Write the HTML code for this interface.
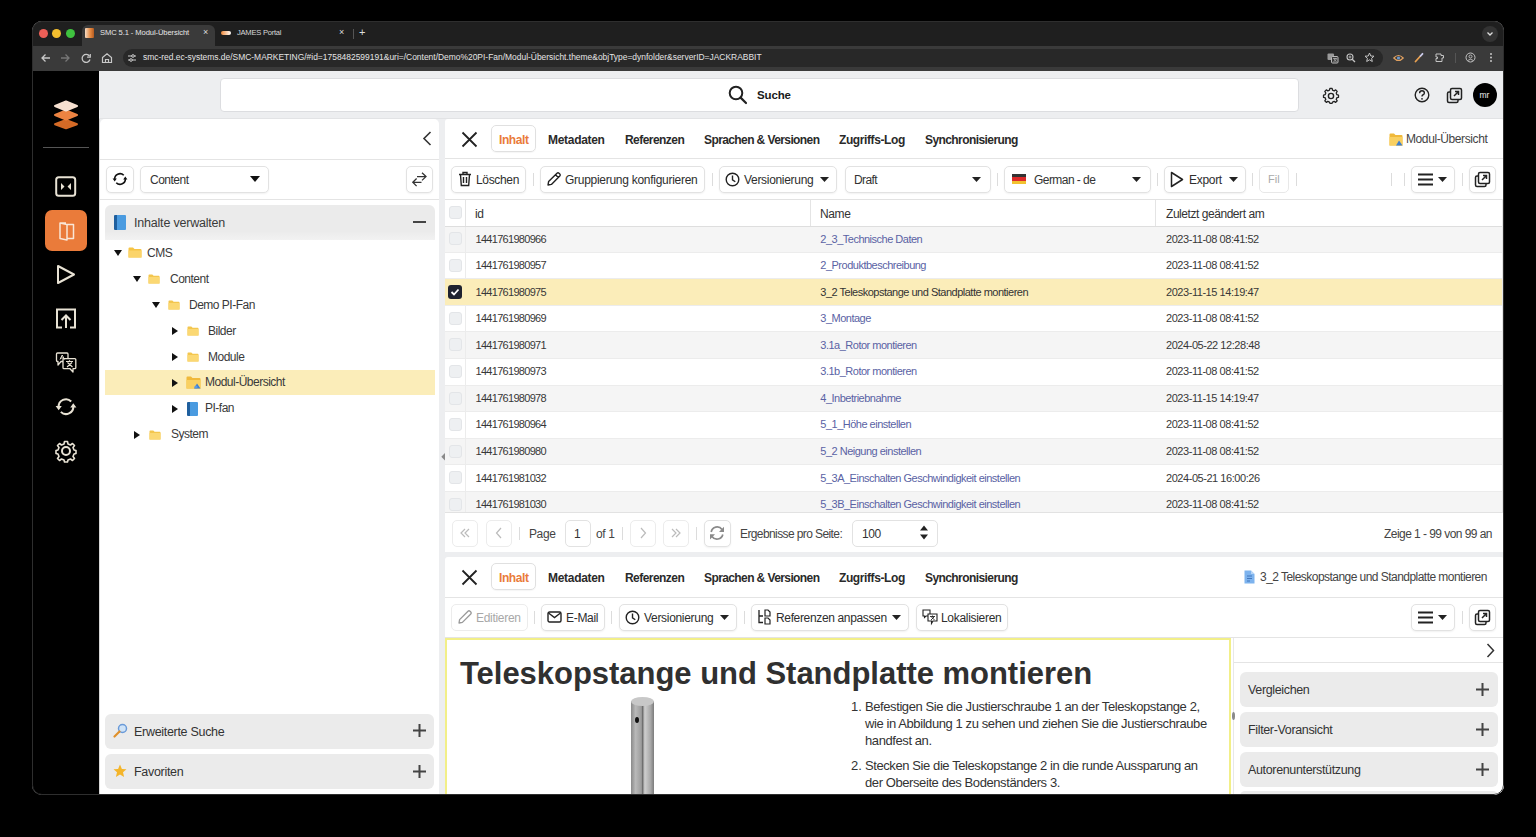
<!DOCTYPE html>
<html><head><meta charset="utf-8">
<style>
*{box-sizing:border-box;margin:0;padding:0}
html,body{width:1536px;height:837px;background:#000;overflow:hidden;font-family:"Liberation Sans",sans-serif;color:#333}
#win{position:absolute;left:0;top:0;width:1536px;height:837px;clip-path:inset(21px 32px 42px 32px round 10px);background:#edeef0}
.a{position:absolute}
.t{position:absolute;white-space:nowrap;line-height:1}
.panel{position:absolute;background:#fff;border-radius:5px 5px 0 0}
.btn{position:absolute;border:1px solid #e2e2e2;border-radius:5px;background:#fff;box-shadow:0 1px 2px rgba(0,0,0,.06)}
.sep{position:absolute;width:1px;height:13px;background:#dcdcdc}
svg{position:absolute;overflow:visible}
.ls12{letter-spacing:-0.5px}
.ls11{letter-spacing:-0.5px}
</style></head>
<body>
<div id="win">
<!-- browser chrome -->
<div class="a" style="left:0;top:0;width:1536px;height:25px;top:21px;background:#1f1f1f"></div>
<div class="a" style="left:0;top:46px;width:1536px;height:25px;background:#3a3a3a"></div>
<!-- active tab -->
<div class="a" style="left:82px;top:25px;width:133px;height:21px;background:#3a3a3a;border-radius:6px 6px 0 0"></div>
<div class="a" style="left:39px;top:29px;width:9px;height:9px;border-radius:50%;background:#ed5f57"></div>
<div class="a" style="left:52px;top:29px;width:9px;height:9px;border-radius:50%;background:#f4bf2f"></div>
<div class="a" style="left:66px;top:29px;width:9px;height:9px;border-radius:50%;background:#3fc23f"></div>
<div class="a" style="left:85px;top:28px;width:9px;height:10px;background:linear-gradient(90deg,#f6dcc5,#e5883f 60%,#b35a20);border-radius:1px"></div>
<div class="t" style="left:100px;top:29px;font-size:7.6px;color:#e6e6e6;letter-spacing:-0.1px">SMC 5.1 - Modul-Übersicht</div>
<div class="t" style="left:203px;top:28px;font-size:9px;color:#ddd">×</div>
<div class="a" style="left:221px;top:31px;width:10px;height:4px;background:linear-gradient(90deg,#f08a3a,#fff);border-radius:2px"></div>
<div class="t" style="left:237px;top:29px;font-size:7.6px;color:#d8d8d8;letter-spacing:-0.25px">JAMES Portal</div>
<div class="t" style="left:339px;top:28px;font-size:9px;color:#ddd">×</div>
<div class="a" style="left:353px;top:29px;width:1px;height:10px;background:#555"></div>
<div class="t" style="left:359px;top:27px;font-size:11px;color:#ddd">+</div>
<div class="a" style="left:1482px;top:26px;width:16px;height:16px;border-radius:50%;background:#333"></div>
<svg style="left:1486px;top:31px" width="8" height="6"><path d="M1.5 1.5 L4 4 L6.5 1.5" stroke="#ddd" stroke-width="1.3" fill="none"/></svg>
<!-- toolbar -->
<svg style="left:40px;top:53px" width="12" height="10"><path d="M10 5 H2 M5.5 1.5 L2 5 L5.5 8.5" stroke="#c8c8c8" stroke-width="1.3" fill="none"/></svg>
<svg style="left:60px;top:53px" width="12" height="10"><path d="M1 5 H9 M5.5 1.5 L9 5 L5.5 8.5" stroke="#777" stroke-width="1.3" fill="none"/></svg>
<svg style="left:81px;top:53px" width="11" height="11"><path d="M8.5 3.2 A4 4 0 1 0 9 6.5" stroke="#c8c8c8" stroke-width="1.3" fill="none"/><path d="M9.3 1 V4.2 H6.1" stroke="#c8c8c8" stroke-width="1.2" fill="none"/></svg>
<svg style="left:101px;top:52px" width="12" height="12"><path d="M1.5 5.5 L6 1.8 L10.5 5.5 V10.5 H1.5 Z M4.5 10.5 V7.5 H7.5 V10.5" stroke="#c8c8c8" stroke-width="1.2" fill="none"/></svg>
<div class="a" style="left:123px;top:49px;width:1260px;height:18px;border-radius:9px;background:#282828"></div>
<svg style="left:126px;top:52px" width="12" height="12"><path d="M2 4 H6 M8 4 H10 M2 8 H4 M6 8 H10" stroke="#ccc" stroke-width="1.2" fill="none"/><circle cx="7" cy="4" r="1.3" stroke="#ccc" fill="none"/><circle cx="5" cy="8" r="1.3" stroke="#ccc" fill="none"/></svg>
<div class="t" style="left:143px;top:53px;font-size:8.45px;color:#e4e4e4;letter-spacing:0">smc-red.ec-systems.de/SMC-MARKETING/#id=1758482599191&amp;uri=/Content/Demo%20PI-Fan/Modul-Übersicht.theme&amp;objType=dynfolder&amp;serverID=JACKRABBIT</div>
<!-- toolbar right icons -->
<svg style="left:1327px;top:53px" width="12" height="11"><rect x="0.5" y="0.5" width="6.5" height="6.5" rx="1" fill="#9a9a9a"/><rect x="4.5" y="3.5" width="6.5" height="6.5" rx="1" stroke="#bbb" stroke-width="1" fill="#3a3a3a"/><path d="M6 5.5 H10 M8 5 V6 M6.5 9 L9.5 6 M7 6 L9.5 9" stroke="#bbb" stroke-width="0.7"/></svg>
<svg style="left:1346px;top:53px" width="10" height="10"><circle cx="4" cy="4" r="3" stroke="#c4c4c4" stroke-width="1.1" fill="none"/><path d="M6.2 6.2 L9 9" stroke="#c4c4c4" stroke-width="1.3"/><path d="M2.5 4 H5.5 M4 2.5 V5.5" stroke="#c4c4c4" stroke-width="0.8"/></svg>
<svg style="left:1364px;top:52px" width="11" height="11"><path d="M5.5 1 L6.8 4 L10 4.2 L7.6 6.3 L8.3 9.5 L5.5 7.8 L2.7 9.5 L3.4 6.3 L1 4.2 L4.2 4 Z" stroke="#c4c4c4" stroke-width="1" fill="none" stroke-linejoin="round"/></svg>
<svg style="left:1393px;top:54px" width="11" height="8"><path d="M0.8 4 Q5.5 -1 10.2 4 Q5.5 9 0.8 4 Z" fill="none" stroke="#e0a060" stroke-width="1.2"/><circle cx="5.5" cy="4" r="1.6" fill="#6a9ad0"/></svg>
<svg style="left:1414px;top:52px" width="10" height="11"><path d="M1.5 9.5 L6.5 4" stroke="#e8a050" stroke-width="1.8" stroke-linecap="round"/><path d="M6.5 4 L8.5 1.8" stroke="#c8c8e8" stroke-width="1.8" stroke-linecap="round"/></svg>
<svg style="left:1435px;top:52px" width="11" height="11"><path d="M1 2 H6 V3.5 H8.5 V6 H7 V9.5 H1 V6.5 H2.5 V5 H1 Z" stroke="#c4c4c4" stroke-width="1" fill="none" stroke-linejoin="round"/></svg>
<div class="a" style="left:1455px;top:53px;width:1px;height:10px;background:#555"></div>
<svg style="left:1465px;top:52px" width="11" height="11"><circle cx="5.5" cy="5.5" r="4.5" stroke="#c4c4c4" stroke-width="1" fill="none"/><circle cx="5.5" cy="4.5" r="1.5" stroke="#c4c4c4" stroke-width="0.9" fill="none"/><path d="M2.6 8.5 Q5.5 6 8.4 8.5" stroke="#c4c4c4" stroke-width="0.9" fill="none"/></svg>
<div class="a" style="left:1490px;top:53px;width:2px;height:2px;background:#c4c4c4;border-radius:1px;box-shadow:0 3.5px 0 #c4c4c4,0 7px 0 #c4c4c4"></div>

<!-- sidebar -->
<div class="a" style="left:32px;top:71px;width:67px;height:724px;background:#000"></div>
<svg style="left:52px;top:98px" width="28" height="32">
  <path d="M14 22 L25 26.2 L14 30.2 L3 26.2 Z" fill="#d56a26" stroke="#d56a26" stroke-width="2" stroke-linejoin="round"/>
  <path d="M14 12.5 L25 17 L14 21.5 L3 17 Z" fill="#ec8342" stroke="#ec8342" stroke-width="2" stroke-linejoin="round"/>
  <path d="M14 3.5 L25 8 L14 12.5 L3 8 Z" fill="#f6e0d0" stroke="#f6e0d0" stroke-width="2" stroke-linejoin="round"/>
</svg>
<div class="a" style="left:43px;top:147px;width:46px;height:1px;background:#555"></div>
<svg style="left:55px;top:176px" width="22" height="21"><rect x="1.2" y="1.2" width="19" height="18.5" rx="2.5" stroke="#e8e2d4" stroke-width="2" fill="none"/><path d="M6 7 L9.5 10.5 L6 14 Z M16 7 L12.5 10.5 L16 14 Z" fill="#e8e2d4"/></svg>
<div class="a" style="left:45px;top:210px;width:42px;height:41px;background:#ea7b3a;border-radius:7px"></div>
<svg style="left:57px;top:220px" width="20" height="22"><path d="M3 3 L10 4.5 V20 L3 18.5 Z M10 4.5 H16.5 V18.5 H10 M3 3 H9" stroke="#f9e6d6" stroke-width="1.5" fill="none" stroke-linejoin="round"/></svg>
<svg style="left:56px;top:264px" width="20" height="21"><path d="M2 2 L18 10.5 L2 19 Z" stroke="#e8e2d4" stroke-width="2" fill="none" stroke-linejoin="round"/></svg>
<svg style="left:55px;top:308px" width="22" height="21"><path d="M7 19.5 H2 V1.5 H20 V19.5 H15 M11 20 V8 M6.5 12 L11 7.5 L15.5 12" stroke="#e8e2d4" stroke-width="2" fill="none"/></svg>
<svg style="left:55px;top:351px" width="22" height="22"><path d="M2.5 2 H12 Q13 2 13 3 V9.5 Q13 10.5 12 10.5 H6 L3 14 V10.5 H2.5 Q1.5 10.5 1.5 9.5 V3 Q1.5 2 2.5 2 Z" stroke="#e8e2d4" stroke-width="1.3" fill="none" stroke-linejoin="round"/><path d="M9 7.6 H19.8 Q20.8 7.6 20.8 8.6 V16.7 Q20.8 17.7 19.8 17.7 H18 V21 L15 17.7 H9 Q8 17.7 8 16.7 V8.6 Q8 7.6 9 7.6 Z" stroke="#e8e2d4" stroke-width="1.3" fill="#000" stroke-linejoin="round"/><path d="M5 8.5 L7.2 4 L9.4 8.5 M5.9 7 H8.5" stroke="#e8e2d4" stroke-width="1" fill="none"/><path d="M11 10.5 H18 M14.5 9.3 V10.5 M12 16 L17 11.5 M12.5 11.5 L17.5 16" stroke="#e8e2d4" stroke-width="1.1" fill="none"/></svg>
<svg style="left:55px;top:396px" width="22" height="22"><path d="M3.7 11.2 A7.3 7.3 0 0 1 16.2 5.5 M18.3 10.2 A7.3 7.3 0 0 1 5.84 15.86" stroke="#e8e2d4" stroke-width="2" fill="none"/><path d="M0.6 10 H6.8 L3.7 14.2 Z M15.2 11.4 H21.4 L18.3 7.2 Z" fill="#e8e2d4"/></svg>
<svg style="left:55px;top:440px" width="22" height="22"><circle cx="11" cy="11" r="4" stroke="#e8e2d4" stroke-width="2" fill="none"/><path d="M9.5 1.5 H12.5 L13 4 L15.5 5 L17.5 3.5 L19.5 5.5 L18 7.5 L19 10 L21 10.5 V13.5 L19 14 L18 16.5 L19.5 18.5 L17.5 20.5 L15.5 19 L13 20 L12.5 22 H9.5 L9 20 L6.5 19 L4.5 20.5 L2.5 18.5 L4 16.5 L3 14 L1 13.5 V10.5 L3 10 L4 7.5 L2.5 5.5 L4.5 3.5 L6.5 5 L9 4 Z" stroke="#e8e2d4" stroke-width="1.6" fill="none" stroke-linejoin="round"/></svg>

<!-- header -->
<div class="a" style="left:99px;top:71px;width:1405px;height:48px;background:#edeef0;border-bottom:1px solid #e2e3e5"></div>
<div class="a" style="left:220px;top:78px;width:1079px;height:34px;background:#fff;border:1px solid #dcdde0;border-radius:4px"></div>
<svg style="left:728px;top:85px" width="20" height="20"><circle cx="8" cy="8" r="6.3" stroke="#222" stroke-width="2" fill="none"/><path d="M12.6 12.6 L18 18" stroke="#222" stroke-width="2.2" stroke-linecap="round"/></svg>
<div class="t" style="left:757px;top:90px;font-size:11.5px;font-weight:bold;color:#1a1a1a;letter-spacing:-0.15px">Suche</div>
<svg style="left:1323px;top:88px" width="16" height="16"><circle cx="8" cy="8" r="2.6" stroke="#222" stroke-width="1.4" fill="none"/><path d="M6.9 1 H9.1 L9.5 2.8 L11.2 3.5 L12.7 2.5 L14.2 4 L13.2 5.6 L13.9 7.3 L15.5 7.7 V9.9 L13.9 10.3 L13.2 12 L14.2 13.5 L12.7 15 L11.2 14 L9.5 14.7 L9.1 16 H6.9 L6.5 14.7 L4.8 14 L3.3 15 L1.8 13.5 L2.8 12 L2.1 10.3 L0.5 9.9 V7.7 L2.1 7.3 L2.8 5.6 L1.8 4 L3.3 2.5 L4.8 3.5 L6.5 2.8 Z" stroke="#222" stroke-width="1.3" fill="none" stroke-linejoin="round" transform="translate(0,-0.6)"/></svg>
<svg style="left:1414px;top:87px" width="16" height="16"><circle cx="8" cy="8" r="6.8" stroke="#222" stroke-width="1.4" fill="none"/><path d="M5.6 6.2 Q5.6 3.8 8 3.8 Q10.4 3.8 10.4 6 Q10.4 7.4 8.8 8 Q8 8.4 8 9.6" stroke="#222" stroke-width="1.4" fill="none"/><circle cx="8" cy="11.8" r="0.9" fill="#222"/></svg>
<svg style="left:1446px;top:87px" width="17" height="17"><path d="M4.5 5 H3 Q1.5 5 1.5 6.5 V14 Q1.5 15.5 3 15.5 H10.5 Q12 15.5 12 14 V12.5" stroke="#222" stroke-width="1.5" fill="none"/><rect x="4.5" y="1.5" width="11" height="11" rx="1.5" stroke="#222" stroke-width="1.5" fill="none"/><path d="M8 9 L12.5 4.5 M9 4.5 H12.5 V8" stroke="#222" stroke-width="1.5" fill="none"/></svg>
<div class="a" style="left:1473px;top:83px;width:24px;height:24px;border-radius:50%;background:#000"></div>
<div class="t" style="left:1479.5px;top:91px;font-size:8.5px;color:#eee;letter-spacing:-0.2px">mr</div>


<!-- LEFT PANEL -->
<div class="panel" style="left:100px;top:119px;width:339px;height:675px"></div>
<div class="a" style="left:99px;top:119px;width:1px;height:675px;background:#d6d6d6"></div>
<svg style="left:422px;top:131px" width="10" height="15"><path d="M8.5 1 L2 7.5 L8.5 14" stroke="#333" stroke-width="1.6" fill="none"/></svg>
<div class="a" style="left:100px;top:159px;width:339px;height:1px;background:#e4e4e4"></div>
<div class="btn" style="left:106px;top:166px;width:28px;height:27px"></div>
<svg style="left:112px;top:171.3px" width="16" height="16"><path d="M2.7 8.5 A5.3 5.3 0 0 1 11.75 4.25 M13.3 7.5 A5.3 5.3 0 0 1 4.25 11.75" stroke="#111" stroke-width="1.6" fill="none"/><path d="M0.6 7.6 H4.8 L2.7 10.4 Z M11.2 8.4 H15.4 L13.3 5.6 Z" fill="#111"/></svg>
<div class="btn" style="left:140px;top:166px;width:129px;height:27px"></div>
<div class="t ls12" style="left:150px;top:174px;font-size:12px;color:#333">Content</div>
<svg style="left:250px;top:176px" width="10" height="6"><path d="M0 0 H10 L5 6 Z" fill="#111"/></svg>
<div class="btn" style="left:406px;top:166px;width:27px;height:27px"></div>
<svg style="left:406px;top:166px" width="27" height="27"><path d="M11 10.6 H20 M16 6.8 L20 10.6 L16 14.4 M15.5 16.3 H6.8 M10.6 12.5 L6.8 16.3 L10.6 20.1" stroke="#333" stroke-width="1.3" fill="none"/></svg>
<div class="a" style="left:100px;top:199px;width:339px;height:1px;background:#e4e4e4"></div>
<div class="a" style="left:105px;top:205px;width:330px;height:35px;background:linear-gradient(#ebebeb 75%,#f2f2f2);border-radius:6px 6px 0 0"></div>
<div class="a" style="left:114px;top:215px;width:12px;height:15px;background:#4a9be0;border-left:3px solid #1f5f9e;border-radius:1px"></div>
<div class="t ls12" style="left:134px;top:216.5px;font-size:12.5px;color:#3a3a3a;letter-spacing:-0.2px">Inhalte verwalten</div>
<div class="a" style="left:413px;top:221px;width:13px;height:2px;background:#444"></div>
<div class="a" style="left:105px;top:369.5px;width:330px;height:25.5px;background:#fbedb9"></div>
<svg style="left:114px;top:250.4px" width="8" height="6"><path d="M0 0 H8 L4 6 Z" fill="#111"/></svg>
<svg style="left:128px;top:247.4px" width="14" height="11"><path d="M0.5 1.5 Q0.5 0.5 1.5 0.5 H5 L6.5 2 H12.5 Q13.5 2 13.5 3 V10.5 H0.5 Z" fill="#f6c444"/><path d="M0.5 3.5 H13.5 V10.5 H0.5 Z" fill="#fbd46a"/></svg>
<div class="t ls12" style="left:147px;top:246.9px;font-size:12px;color:#3a3a3a">CMS</div>
<svg style="left:133px;top:276.3px" width="8" height="6"><path d="M0 0 H8 L4 6 Z" fill="#111"/></svg>
<svg style="left:148px;top:274.3px" width="12" height="10"><path d="M0.5 1.3 Q0.5 0.5 1.3 0.5 H4.3 L5.6 1.8 H10.8 Q11.5 1.8 11.5 2.6 V9.5 H0.5 Z" fill="#f3c64e"/><path d="M0.5 3 H11.5 V9.5 H0.5 Z" fill="#fbd873"/></svg>
<div class="t ls12" style="left:170px;top:272.8px;font-size:12px;color:#3a3a3a">Content</div>
<svg style="left:152px;top:302.2px" width="8" height="6"><path d="M0 0 H8 L4 6 Z" fill="#111"/></svg>
<svg style="left:168px;top:300.2px" width="12" height="10"><path d="M0.5 1.3 Q0.5 0.5 1.3 0.5 H4.3 L5.6 1.8 H10.8 Q11.5 1.8 11.5 2.6 V9.5 H0.5 Z" fill="#f3c64e"/><path d="M0.5 3 H11.5 V9.5 H0.5 Z" fill="#fbd873"/></svg>
<div class="t ls12" style="left:189px;top:298.7px;font-size:12px;color:#3a3a3a">Demo PI-Fan</div>
<svg style="left:172px;top:327.1px" width="6" height="8"><path d="M0 0 V8 L6 4 Z" fill="#111"/></svg>
<svg style="left:187px;top:326.1px" width="12" height="10"><path d="M0.5 1.3 Q0.5 0.5 1.3 0.5 H4.3 L5.6 1.8 H10.8 Q11.5 1.8 11.5 2.6 V9.5 H0.5 Z" fill="#f3c64e"/><path d="M0.5 3 H11.5 V9.5 H0.5 Z" fill="#fbd873"/></svg>
<div class="t ls12" style="left:208px;top:324.6px;font-size:12px;color:#3a3a3a">Bilder</div>
<svg style="left:172px;top:353.0px" width="6" height="8"><path d="M0 0 V8 L6 4 Z" fill="#111"/></svg>
<svg style="left:187px;top:352.0px" width="12" height="10"><path d="M0.5 1.3 Q0.5 0.5 1.3 0.5 H4.3 L5.6 1.8 H10.8 Q11.5 1.8 11.5 2.6 V9.5 H0.5 Z" fill="#f3c64e"/><path d="M0.5 3 H11.5 V9.5 H0.5 Z" fill="#fbd873"/></svg>
<div class="t ls12" style="left:208px;top:350.5px;font-size:12px;color:#3a3a3a">Module</div>
<svg style="left:172px;top:378.9px" width="6" height="8"><path d="M0 0 V8 L6 4 Z" fill="#111"/></svg>
<svg style="left:186px;top:375.9px" width="16" height="14"><path d="M0.5 1.5 Q0.5 0.5 1.5 0.5 H5 L6.5 2 H13.5 Q14.5 2 14.5 3 V12.5 H0.5 Z" fill="#f0b93a"/><path d="M0.5 4 H14.5 V12.5 H0.5 Z" fill="#f9d061"/><path d="M8 12.5 L11 7.5 L14.5 12.5 Z" fill="#3e7fd0"/><circle cx="10" cy="11" r="1.6" fill="#5a9ae6"/></svg>
<div class="t ls12" style="left:205px;top:376.4px;font-size:12px;color:#3a3a3a">Modul-Übersicht</div>
<svg style="left:172px;top:404.8px" width="6" height="8"><path d="M0 0 V8 L6 4 Z" fill="#111"/></svg>
<div class="a" style="left:187px;top:401.8px;width:11px;height:14px;background:#4a9be0;border-left:3px solid #1f5f9e;border-radius:1px"></div>
<div class="t ls12" style="left:205px;top:402.3px;font-size:12px;color:#3a3a3a">PI-fan</div>
<svg style="left:134px;top:430.7px" width="6" height="8"><path d="M0 0 V8 L6 4 Z" fill="#111"/></svg>
<svg style="left:149px;top:429.7px" width="12" height="10"><path d="M0.5 1.3 Q0.5 0.5 1.3 0.5 H4.3 L5.6 1.8 H10.8 Q11.5 1.8 11.5 2.6 V9.5 H0.5 Z" fill="#f3c64e"/><path d="M0.5 3 H11.5 V9.5 H0.5 Z" fill="#fbd873"/></svg>
<div class="t ls12" style="left:171px;top:428.2px;font-size:12px;color:#3a3a3a">System</div>
<svg style="left:441px;top:452.5px" width="4" height="8"><path d="M4 0 V7.5 L0.3 3.75 Z" fill="#8a8a8a"/></svg>
<div class="a" style="left:105px;top:714px;width:329px;height:35px;background:#ebebeb;border-radius:6px"></div>
<svg style="left:113px;top:723px" width="15" height="15"><circle cx="9.5" cy="5.5" r="4" stroke="#6a9ad8" stroke-width="1.5" fill="#cfe3f7"/><path d="M6.5 8.5 L1.5 13.5" stroke="#e0902a" stroke-width="2.2" stroke-linecap="round"/></svg>
<div class="t ls12" style="left:134px;top:726px;font-size:12.5px;color:#333;letter-spacing:-0.3px">Erweiterte Suche</div>
<svg style="left:413px;top:724px" width="13" height="13"><path d="M6.5 0 V13 M0 6.5 H13" stroke="#444" stroke-width="2"/></svg>
<div class="a" style="left:105px;top:754px;width:329px;height:35px;background:#ebebeb;border-radius:6px"></div>
<svg style="left:113px;top:764px" width="14" height="14"><path d="M7 0.5 L8.9 4.9 L13.5 5.2 L10 8.2 L11.1 13 L7 10.4 L2.9 13 L4 8.2 L0.5 5.2 L5.1 4.9 Z" fill="#f4b52a"/></svg>
<div class="t ls12" style="left:134px;top:766px;font-size:12.5px;color:#333;letter-spacing:-0.3px">Favoriten</div>
<svg style="left:413px;top:765px" width="13" height="13"><path d="M6.5 0 V13 M0 6.5 H13" stroke="#444" stroke-width="2"/></svg>

<!-- UPPER RIGHT PANEL -->
<div class="panel" style="left:445px;top:119px;width:1059px;height:433px;border-radius:3px 3px 0 0"></div>
<svg style="left:461px;top:131px" width="17" height="17"><path d="M1.5 1.5 L15.5 15.5 M15.5 1.5 L1.5 15.5" stroke="#222" stroke-width="1.8"/></svg>
<div class="a" style="left:491px;top:125px;width:45px;height:27px;border:1px solid #e0e0e0;border-radius:5px;box-shadow:0 1px 1px rgba(0,0,0,.04)"></div>
<div class="t" style="left:499px;top:134px;font-size:12px;font-weight:bold;color:#ea7b3a;letter-spacing:-0.4px">Inhalt</div>
<div class="t" style="left:548px;top:134px;font-size:12px;font-weight:bold;color:#2a2a2a;letter-spacing:-0.3px">Metadaten</div>
<div class="t" style="left:625px;top:134px;font-size:12px;font-weight:bold;color:#2a2a2a;letter-spacing:-0.55px">Referenzen</div>
<div class="t" style="left:704px;top:134px;font-size:12px;font-weight:bold;color:#2a2a2a;letter-spacing:-0.6px">Sprachen &amp; Versionen</div>
<div class="t" style="left:839px;top:134px;font-size:12px;font-weight:bold;color:#2a2a2a;letter-spacing:-0.4px">Zugriffs-Log</div>
<div class="t" style="left:925px;top:134px;font-size:12px;font-weight:bold;color:#2a2a2a;letter-spacing:-0.58px">Synchronisierung</div>
<svg style="left:1389px;top:133px" width="14" height="13"><path d="M0.5 1.5 Q0.5 0.5 1.5 0.5 H5 L6.5 2 H12.5 Q13.5 2 13.5 3 V12.5 H0.5 Z" fill="#f0b93a"/><path d="M0.5 4 H13.5 V12.5 H0.5 Z" fill="#f9d061"/><path d="M7 12.5 L10 7.5 L13.5 12.5 Z" fill="#3e7fd0"/></svg>
<div class="t" style="left:1406px;top:133px;font-size:12px;color:#444;letter-spacing:-0.4px">Modul-Übersicht</div>
<div class="a" style="left:445px;top:158px;width:1059px;height:1px;background:#e4e4e4"></div>
<!-- toolbar -->
<div class="btn" style="left:451px;top:166px;width:75px;height:27px"></div>
<svg style="left:458px;top:171px" width="14" height="16"><path d="M1 3.5 H13 M5 3.5 V1.5 H9 V3.5 M2.5 3.5 L3.3 14.5 H10.7 L11.5 3.5 M5.5 6 V12 M8.5 6 V12" stroke="#222" stroke-width="1.4" fill="none"/></svg>
<div class="t" style="left:476px;top:174px;font-size:12px;color:#2e2e2e;letter-spacing:-0.34px">Löschen</div>
<div class="sep" style="left:533px;top:173px"></div>
<div class="btn" style="left:540px;top:166px;width:165px;height:27px"></div>
<svg style="left:546px;top:171px" width="16" height="16"><path d="M2 14 L2.6 10.6 L11 2.2 Q12 1.2 13 2.2 L13.8 3 Q14.8 4 13.8 5 L5.4 13.4 Z M9.5 3.7 L12.3 6.5" stroke="#222" stroke-width="1.4" fill="none" stroke-linejoin="round"/></svg>
<div class="t" style="left:565px;top:174px;font-size:12px;color:#2e2e2e;letter-spacing:-0.28px">Gruppierung konfigurieren</div>
<div class="sep" style="left:712px;top:173px"></div>
<div class="btn" style="left:719px;top:166px;width:118px;height:27px"></div>
<svg style="left:725px;top:172px" width="15" height="15"><circle cx="7.5" cy="7.5" r="6.3" stroke="#222" stroke-width="1.4" fill="none"/><path d="M7.5 3.5 V7.8 L10.3 9.8" stroke="#222" stroke-width="1.4" fill="none"/></svg>
<div class="t" style="left:744px;top:174px;font-size:12px;color:#2e2e2e;letter-spacing:-0.31px">Versionierung</div>
<svg style="left:820px;top:177px" width="9" height="5"><path d="M0 0 H9 L4.5 5 Z" fill="#222"/></svg>
<div class="btn" style="left:845px;top:166px;width:146px;height:27px"></div>
<div class="t" style="left:854px;top:174px;font-size:12px;color:#333;letter-spacing:-0.6px">Draft</div>
<svg style="left:972px;top:177px" width="9" height="5"><path d="M0 0 H9 L4.5 5 Z" fill="#222"/></svg>
<div class="sep" style="left:997px;top:173px"></div>
<div class="btn" style="left:1004px;top:166px;width:147px;height:27px"></div>
<div class="a" style="left:1012px;top:174px;width:14px;height:10px;background:linear-gradient(#333 0 33%,#dd2a2a 33% 66%,#f2c230 66%)"></div>
<div class="t" style="left:1034px;top:174px;font-size:12px;color:#333;letter-spacing:-0.55px">German - de</div>
<svg style="left:1132px;top:177px" width="9" height="5"><path d="M0 0 H9 L4.5 5 Z" fill="#222"/></svg>
<div class="sep" style="left:1157px;top:173px"></div>
<div class="btn" style="left:1164px;top:166px;width:82px;height:27px"></div>
<svg style="left:1170px;top:171px" width="14" height="17"><path d="M1.5 1.5 L12.5 8.5 L1.5 15.5 Z" stroke="#222" stroke-width="1.5" fill="none" stroke-linejoin="round"/></svg>
<div class="t" style="left:1189px;top:174px;font-size:12px;color:#2e2e2e;letter-spacing:-0.3px">Export</div>
<svg style="left:1229px;top:177px" width="9" height="5"><path d="M0 0 H9 L4.5 5 Z" fill="#222"/></svg>
<div class="sep" style="left:1252px;top:173px"></div>
<div class="btn" style="left:1259px;top:166px;width:30px;height:27px;box-shadow:none;border-color:#e8e8e8"></div>
<div class="t" style="left:1268px;top:174px;font-size:11px;color:#aaa">Fil</div>
<div class="sep" style="left:1296px;top:173px"></div>
<div class="sep" style="left:1391px;top:173px"></div>
<div class="sep" style="left:1404px;top:173px"></div>
<div class="btn" style="left:1411px;top:166px;width:44px;height:27px"></div>
<svg style="left:1418px;top:173px" width="16" height="13"><path d="M0 1.5 H15 M0 6.5 H15 M0 11.5 H15" stroke="#222" stroke-width="2.2"/></svg>
<svg style="left:1438px;top:177px" width="9" height="5"><path d="M0 0 H9 L4.5 5 Z" fill="#222"/></svg>
<div class="sep" style="left:1462px;top:173px"></div>
<div class="btn" style="left:1469px;top:166px;width:27px;height:27px"></div>
<svg style="left:1474px;top:171px" width="17" height="17"><path d="M4.5 5 H3 Q1.5 5 1.5 6.5 V14 Q1.5 15.5 3 15.5 H10.5 Q12 15.5 12 14 V12.5" stroke="#222" stroke-width="1.5" fill="none"/><rect x="4.5" y="1.5" width="11" height="11" rx="1.5" stroke="#222" stroke-width="1.5" fill="none"/><path d="M8 9 L12.5 4.5 M9 4.5 H12.5 V8" stroke="#222" stroke-width="1.5" fill="none"/></svg>
<!-- table -->
<div class="a" style="left:445px;top:199px;width:1059px;height:1px;background:#e2e2e2"></div>
<div class="a" style="left:465px;top:200px;width:1px;height:26px;background:#e4e4e4"></div>
<div class="a" style="left:810px;top:200px;width:1px;height:26px;background:#e4e4e4"></div>
<div class="a" style="left:1155px;top:200px;width:1px;height:26px;background:#e4e4e4"></div>
<div class="a" style="left:449px;top:206px;width:13px;height:13px;background:#eef0f2;border:1px solid #e3e5e8;border-radius:3px"></div>
<div class="t" style="left:475px;top:208px;font-size:12px;color:#333;letter-spacing:-0.3px">id</div>
<div class="t" style="left:820px;top:208px;font-size:12px;color:#333;letter-spacing:-0.4px">Name</div>
<div class="t" style="left:1166px;top:208px;font-size:12px;color:#333;letter-spacing:-0.45px">Zuletzt geändert am</div>
<div class="a" style="left:445px;top:226.3px;width:1059px;height:285.7px;overflow:hidden">
<div class="a" style="left:0;top:0.00px;width:1059px;height:26.55px;background:#f5f5f5;border-bottom:1px solid #ececec"></div>
<div class="a" style="left:20px;top:0.00px;width:1px;height:26.55px;background:#ececec"></div>
<div class="a" style="left:4px;top:5.98px;width:13px;height:13px;background:#eef0f2;border:1px solid #e3e5e8;border-radius:3px"></div>
<div class="t" style="left:30.5px;top:7.28px;font-size:11px;color:#383838;letter-spacing:-0.7px">1441761980966</div>
<div class="t" style="left:375.3px;top:7.28px;font-size:11px;color:#5a62a4;letter-spacing:-0.5px">2_3_Technische Daten</div>
<div class="t" style="left:721px;top:7.28px;font-size:11px;color:#383838;letter-spacing:-0.45px">2023-11-08 08:41:52</div>
<div class="a" style="left:0;top:26.55px;width:1059px;height:26.55px;background:#fff;border-bottom:1px solid #ececec"></div>
<div class="a" style="left:20px;top:26.55px;width:1px;height:26.55px;background:#ececec"></div>
<div class="a" style="left:4px;top:32.53px;width:13px;height:13px;background:#eef0f2;border:1px solid #e3e5e8;border-radius:3px"></div>
<div class="t" style="left:30.5px;top:33.83px;font-size:11px;color:#383838;letter-spacing:-0.7px">1441761980957</div>
<div class="t" style="left:375.3px;top:33.83px;font-size:11px;color:#5a62a4;letter-spacing:-0.5px">2_Produktbeschreibung</div>
<div class="t" style="left:721px;top:33.83px;font-size:11px;color:#383838;letter-spacing:-0.45px">2023-11-08 08:41:52</div>
<div class="a" style="left:0;top:53.10px;width:1059px;height:26.55px;background:#fbedb9;border-bottom:1px solid #ececec"></div>
<div class="a" style="left:3px;top:58.38px;width:14px;height:14px;background:#1e2230;border-radius:3px"></div>
<svg style="left:5px;top:60.38px" width="10" height="10"><path d="M1.5 5 L4 7.5 L8.5 2.5" stroke="#fff" stroke-width="1.8" fill="none"/></svg>
<div class="t" style="left:30.5px;top:60.38px;font-size:11px;color:#383838;letter-spacing:-0.7px">1441761980975</div>
<div class="t" style="left:375.3px;top:60.38px;font-size:11px;color:#333;letter-spacing:-0.5px">3_2 Teleskopstange und Standplatte montieren</div>
<div class="t" style="left:721px;top:60.38px;font-size:11px;color:#383838;letter-spacing:-0.45px">2023-11-15 14:19:47</div>
<div class="a" style="left:0;top:79.65px;width:1059px;height:26.55px;background:#fff;border-bottom:1px solid #ececec"></div>
<div class="a" style="left:20px;top:79.65px;width:1px;height:26.55px;background:#ececec"></div>
<div class="a" style="left:4px;top:85.63px;width:13px;height:13px;background:#eef0f2;border:1px solid #e3e5e8;border-radius:3px"></div>
<div class="t" style="left:30.5px;top:86.93px;font-size:11px;color:#383838;letter-spacing:-0.7px">1441761980969</div>
<div class="t" style="left:375.3px;top:86.93px;font-size:11px;color:#5a62a4;letter-spacing:-0.5px">3_Montage</div>
<div class="t" style="left:721px;top:86.93px;font-size:11px;color:#383838;letter-spacing:-0.45px">2023-11-08 08:41:52</div>
<div class="a" style="left:0;top:106.20px;width:1059px;height:26.55px;background:#f5f5f5;border-bottom:1px solid #ececec"></div>
<div class="a" style="left:20px;top:106.20px;width:1px;height:26.55px;background:#ececec"></div>
<div class="a" style="left:4px;top:112.18px;width:13px;height:13px;background:#eef0f2;border:1px solid #e3e5e8;border-radius:3px"></div>
<div class="t" style="left:30.5px;top:113.48px;font-size:11px;color:#383838;letter-spacing:-0.7px">1441761980971</div>
<div class="t" style="left:375.3px;top:113.48px;font-size:11px;color:#5a62a4;letter-spacing:-0.5px">3.1a_Rotor montieren</div>
<div class="t" style="left:721px;top:113.48px;font-size:11px;color:#383838;letter-spacing:-0.45px">2024-05-22 12:28:48</div>
<div class="a" style="left:0;top:132.75px;width:1059px;height:26.55px;background:#fff;border-bottom:1px solid #ececec"></div>
<div class="a" style="left:20px;top:132.75px;width:1px;height:26.55px;background:#ececec"></div>
<div class="a" style="left:4px;top:138.73px;width:13px;height:13px;background:#eef0f2;border:1px solid #e3e5e8;border-radius:3px"></div>
<div class="t" style="left:30.5px;top:140.03px;font-size:11px;color:#383838;letter-spacing:-0.7px">1441761980973</div>
<div class="t" style="left:375.3px;top:140.03px;font-size:11px;color:#5a62a4;letter-spacing:-0.5px">3.1b_Rotor montieren</div>
<div class="t" style="left:721px;top:140.03px;font-size:11px;color:#383838;letter-spacing:-0.45px">2023-11-08 08:41:52</div>
<div class="a" style="left:0;top:159.30px;width:1059px;height:26.55px;background:#f5f5f5;border-bottom:1px solid #ececec"></div>
<div class="a" style="left:20px;top:159.30px;width:1px;height:26.55px;background:#ececec"></div>
<div class="a" style="left:4px;top:165.28px;width:13px;height:13px;background:#eef0f2;border:1px solid #e3e5e8;border-radius:3px"></div>
<div class="t" style="left:30.5px;top:166.58px;font-size:11px;color:#383838;letter-spacing:-0.7px">1441761980978</div>
<div class="t" style="left:375.3px;top:166.58px;font-size:11px;color:#5a62a4;letter-spacing:-0.5px">4_Inbetriebnahme</div>
<div class="t" style="left:721px;top:166.58px;font-size:11px;color:#383838;letter-spacing:-0.45px">2023-11-15 14:19:47</div>
<div class="a" style="left:0;top:185.85px;width:1059px;height:26.55px;background:#fff;border-bottom:1px solid #ececec"></div>
<div class="a" style="left:20px;top:185.85px;width:1px;height:26.55px;background:#ececec"></div>
<div class="a" style="left:4px;top:191.82px;width:13px;height:13px;background:#eef0f2;border:1px solid #e3e5e8;border-radius:3px"></div>
<div class="t" style="left:30.5px;top:193.12px;font-size:11px;color:#383838;letter-spacing:-0.7px">1441761980964</div>
<div class="t" style="left:375.3px;top:193.12px;font-size:11px;color:#5a62a4;letter-spacing:-0.5px">5_1_Höhe einstellen</div>
<div class="t" style="left:721px;top:193.12px;font-size:11px;color:#383838;letter-spacing:-0.45px">2023-11-08 08:41:52</div>
<div class="a" style="left:0;top:212.40px;width:1059px;height:26.55px;background:#f5f5f5;border-bottom:1px solid #ececec"></div>
<div class="a" style="left:20px;top:212.40px;width:1px;height:26.55px;background:#ececec"></div>
<div class="a" style="left:4px;top:218.38px;width:13px;height:13px;background:#eef0f2;border:1px solid #e3e5e8;border-radius:3px"></div>
<div class="t" style="left:30.5px;top:219.68px;font-size:11px;color:#383838;letter-spacing:-0.7px">1441761980980</div>
<div class="t" style="left:375.3px;top:219.68px;font-size:11px;color:#5a62a4;letter-spacing:-0.5px">5_2 Neigung einstellen</div>
<div class="t" style="left:721px;top:219.68px;font-size:11px;color:#383838;letter-spacing:-0.45px">2023-11-08 08:41:52</div>
<div class="a" style="left:0;top:238.95px;width:1059px;height:26.55px;background:#fff;border-bottom:1px solid #ececec"></div>
<div class="a" style="left:20px;top:238.95px;width:1px;height:26.55px;background:#ececec"></div>
<div class="a" style="left:4px;top:244.93px;width:13px;height:13px;background:#eef0f2;border:1px solid #e3e5e8;border-radius:3px"></div>
<div class="t" style="left:30.5px;top:246.23px;font-size:11px;color:#383838;letter-spacing:-0.7px">1441761981032</div>
<div class="t" style="left:375.3px;top:246.23px;font-size:11px;color:#5a62a4;letter-spacing:-0.5px">5_3A_Einschalten Geschwindigkeit einstellen</div>
<div class="t" style="left:721px;top:246.23px;font-size:11px;color:#383838;letter-spacing:-0.45px">2024-05-21 16:00:26</div>
<div class="a" style="left:0;top:265.50px;width:1059px;height:26.55px;background:#f5f5f5;border-bottom:1px solid #ececec"></div>
<div class="a" style="left:20px;top:265.50px;width:1px;height:26.55px;background:#ececec"></div>
<div class="a" style="left:4px;top:271.47px;width:13px;height:13px;background:#eef0f2;border:1px solid #e3e5e8;border-radius:3px"></div>
<div class="t" style="left:30.5px;top:272.77px;font-size:11px;color:#383838;letter-spacing:-0.7px">1441761981030</div>
<div class="t" style="left:375.3px;top:272.77px;font-size:11px;color:#5a62a4;letter-spacing:-0.5px">5_3B_Einschalten Geschwindigkeit einstellen</div>
<div class="t" style="left:721px;top:272.77px;font-size:11px;color:#383838;letter-spacing:-0.45px">2023-11-08 08:41:52</div>
</div>

<div class="a" style="left:445px;top:226px;width:1059px;height:1px;background:#dedede"></div>
<div class="a" style="left:1502px;top:200px;width:1px;height:312px;background:#e4e4e4"></div>
<!-- pager -->
<div class="a" style="left:445px;top:512px;width:1059px;height:1px;background:#e2e2e2"></div>
<div class="btn" style="left:452px;top:520px;width:26px;height:27px;box-shadow:none;border-color:#ececec"></div>
<svg style="left:459px;top:528px" width="12" height="10"><path d="M6 1 L2 5 L6 9 M10 1 L6 5 L10 9" stroke="#bbb" stroke-width="1.2" fill="none"/></svg>
<div class="btn" style="left:486px;top:520px;width:26px;height:27px;box-shadow:none;border-color:#ececec"></div>
<svg style="left:495px;top:527px" width="8" height="12"><path d="M6 1 L1.5 6 L6 11" stroke="#bbb" stroke-width="1.2" fill="none"/></svg>
<div class="sep" style="left:519px;top:527px"></div>
<div class="t" style="left:529px;top:528px;font-size:12px;color:#444;letter-spacing:-0.4px">Page</div>
<div class="btn" style="left:565px;top:520px;width:26px;height:27px;box-shadow:none"></div>
<div class="t" style="left:574px;top:528px;font-size:12px;color:#333">1</div>
<div class="t" style="left:596px;top:528px;font-size:12px;color:#444;letter-spacing:-0.4px">of 1</div>
<div class="sep" style="left:622px;top:527px"></div>
<div class="btn" style="left:630px;top:520px;width:26px;height:27px;box-shadow:none;border-color:#ececec"></div>
<svg style="left:639px;top:527px" width="8" height="12"><path d="M2 1 L6.5 6 L2 11" stroke="#bbb" stroke-width="1.2" fill="none"/></svg>
<div class="btn" style="left:663px;top:520px;width:26px;height:27px;box-shadow:none;border-color:#ececec"></div>
<svg style="left:670px;top:528px" width="12" height="10"><path d="M2 1 L6 5 L2 9 M6 1 L10 5 L6 9" stroke="#bbb" stroke-width="1.2" fill="none"/></svg>
<div class="sep" style="left:696px;top:527px"></div>
<div class="btn" style="left:704px;top:520px;width:27px;height:27px"></div>
<svg style="left:708.7px;top:524.9px" width="16" height="16"><path d="M2.2 7 A6 6 0 0 1 13 4.5 M13.8 9.5 A6 6 0 0 1 3 11.5" stroke="#8a8a8a" stroke-width="1.7" fill="none"/><path d="M10 7 H15 V1.8 Z M6 9.2 H1 V14.4 Z" fill="#8a8a8a"/></svg>
<div class="t" style="left:740px;top:528px;font-size:12px;color:#444;letter-spacing:-0.6px">Ergebnisse pro Seite:</div>
<div class="btn" style="left:852px;top:520px;width:86px;height:27px;box-shadow:none"></div>
<div class="t" style="left:862px;top:528px;font-size:12px;color:#333;letter-spacing:-0.4px">100</div>
<svg style="left:919px;top:524px" width="10" height="17"><path d="M1 6.5 L5 1.5 L9 6.5 Z M1 10.5 L5 15.5 L9 10.5 Z" fill="#222"/></svg>
<div class="t" style="left:1384px;top:528px;font-size:12px;color:#444;letter-spacing:-0.55px">Zeige 1 - 99 von 99 an</div>

<!-- LOWER RIGHT PANEL -->
<div class="panel" style="left:445px;top:557px;width:1059px;height:237px;border-radius:3px 3px 0 0"></div>
<svg style="left:461px;top:569px" width="17" height="17"><path d="M1.5 1.5 L15.5 15.5 M15.5 1.5 L1.5 15.5" stroke="#222" stroke-width="1.8"/></svg>
<div class="a" style="left:491px;top:563px;width:45px;height:27px;border:1px solid #e0e0e0;border-radius:5px;box-shadow:0 1px 1px rgba(0,0,0,.04)"></div>
<div class="t" style="left:499px;top:572px;font-size:12px;font-weight:bold;color:#ea7b3a;letter-spacing:-0.4px">Inhalt</div>
<div class="t" style="left:548px;top:572px;font-size:12px;font-weight:bold;color:#2a2a2a;letter-spacing:-0.3px">Metadaten</div>
<div class="t" style="left:625px;top:572px;font-size:12px;font-weight:bold;color:#2a2a2a;letter-spacing:-0.55px">Referenzen</div>
<div class="t" style="left:704px;top:572px;font-size:12px;font-weight:bold;color:#2a2a2a;letter-spacing:-0.6px">Sprachen &amp; Versionen</div>
<div class="t" style="left:839px;top:572px;font-size:12px;font-weight:bold;color:#2a2a2a;letter-spacing:-0.4px">Zugriffs-Log</div>
<div class="t" style="left:925px;top:572px;font-size:12px;font-weight:bold;color:#2a2a2a;letter-spacing:-0.58px">Synchronisierung</div>
<svg style="left:1244px;top:570px" width="11" height="14"><path d="M0.5 0.5 H7 L10.5 4 V13.5 H0.5 Z" fill="#7db3ee"/><path d="M7 0.5 V4 H10.5" fill="#b9d6f6"/><path d="M3 6 H8 M3 8.5 H8 M3 11 H6" stroke="#3b6fb5" stroke-width="0.9"/></svg>
<div class="t" style="left:1260px;top:571px;font-size:12px;color:#444;letter-spacing:-0.54px">3_2 Teleskopstange und Standplatte montieren</div>
<div class="a" style="left:445px;top:597px;width:1059px;height:1px;background:#e4e4e4"></div>
<!-- toolbar -->
<div class="btn" style="left:451px;top:604px;width:77px;height:27px;box-shadow:none;border-color:#ececec"></div>
<svg style="left:457px;top:609px" width="16" height="16"><path d="M2 14 L2.6 10.6 L11 2.2 Q12 1.2 13 2.2 L13.8 3 Q14.8 4 13.8 5 L5.4 13.4 Z" stroke="#999" stroke-width="1.3" fill="none" stroke-linejoin="round"/></svg>
<div class="t" style="left:476px;top:612px;font-size:12px;color:#a8a8a8;letter-spacing:-0.3px">Editieren</div>
<div class="sep" style="left:534px;top:611px"></div>
<div class="btn" style="left:541px;top:604px;width:64px;height:27px"></div>
<svg style="left:547px;top:611px" width="15" height="12"><rect x="1" y="1" width="13" height="10" rx="1.5" stroke="#222" stroke-width="1.4" fill="none"/><path d="M1.5 2 L7.5 6.5 L13.5 2" stroke="#222" stroke-width="1.4" fill="none"/></svg>
<div class="t" style="left:566px;top:612px;font-size:12px;color:#2e2e2e;letter-spacing:-0.3px">E-Mail</div>
<div class="sep" style="left:611px;top:611px"></div>
<div class="btn" style="left:619px;top:604px;width:118px;height:27px"></div>
<svg style="left:625px;top:610px" width="15" height="15"><circle cx="7.5" cy="7.5" r="6.3" stroke="#222" stroke-width="1.4" fill="none"/><path d="M7.5 3.5 V7.8 L10.3 9.8" stroke="#222" stroke-width="1.4" fill="none"/></svg>
<div class="t" style="left:644px;top:612px;font-size:12px;color:#2e2e2e;letter-spacing:-0.31px">Versionierung</div>
<svg style="left:720px;top:615px" width="9" height="5"><path d="M0 0 H9 L4.5 5 Z" fill="#222"/></svg>
<div class="sep" style="left:744px;top:611px"></div>
<div class="btn" style="left:751px;top:604px;width:158px;height:27px"></div>
<svg style="left:757px;top:609px" width="15" height="16"><path d="M2 1 V13.5 H6 M2 7 H6" stroke="#222" stroke-width="1.3" fill="none"/><path d="M8 1 H11 L13 3 V7 H8 Z M8 9 H11 L13 11 V15 H8 Z" stroke="#222" stroke-width="1.2" fill="none"/></svg>
<div class="t" style="left:776px;top:612px;font-size:12px;color:#2e2e2e;letter-spacing:-0.35px">Referenzen anpassen</div>
<svg style="left:892px;top:615px" width="9" height="5"><path d="M0 0 H9 L4.5 5 Z" fill="#222"/></svg>
<div class="btn" style="left:916px;top:604px;width:92px;height:27px"></div>
<svg style="left:922px;top:609px" width="16" height="16"><path d="M1 1 H8 V7 H4 L2.5 8.5 V7 H1 Z" stroke="#222" stroke-width="1.1" fill="none"/><path d="M6 5 H15 V12 H11 L9.5 14.5 V12 H6 Z" stroke="#222" stroke-width="1.1" fill="#fff"/><path d="M8 7.5 H13 M10.5 6.5 V8 M9 11 L12 8 M9.5 8 L12.5 11" stroke="#222" stroke-width="0.9"/></svg>
<div class="t" style="left:941px;top:612px;font-size:12px;color:#2e2e2e;letter-spacing:-0.3px">Lokalisieren</div>
<div class="btn" style="left:1411px;top:604px;width:44px;height:27px"></div>
<svg style="left:1418px;top:611px" width="16" height="13"><path d="M0 1.5 H15 M0 6.5 H15 M0 11.5 H15" stroke="#222" stroke-width="2.2"/></svg>
<svg style="left:1438px;top:615px" width="9" height="5"><path d="M0 0 H9 L4.5 5 Z" fill="#222"/></svg>
<div class="sep" style="left:1462px;top:611px"></div>
<div class="btn" style="left:1469px;top:604px;width:27px;height:27px"></div>
<svg style="left:1474px;top:609px" width="17" height="17"><path d="M4.5 5 H3 Q1.5 5 1.5 6.5 V14 Q1.5 15.5 3 15.5 H10.5 Q12 15.5 12 14 V12.5" stroke="#222" stroke-width="1.5" fill="none"/><rect x="4.5" y="1.5" width="11" height="11" rx="1.5" stroke="#222" stroke-width="1.5" fill="none"/><path d="M8 9 L12.5 4.5 M9 4.5 H12.5 V8" stroke="#222" stroke-width="1.5" fill="none"/></svg>
<div class="a" style="left:445px;top:637px;width:1059px;height:1px;background:#e4e4e4"></div>
<!-- content box -->
<div class="a" style="left:445px;top:638px;width:786px;height:160px;border:2px solid #f2ef88;border-bottom:none"></div>
<div class="t" style="left:460px;top:657.5px;font-size:31px;font-weight:bold;color:#303030;letter-spacing:-0.03px">Teleskopstange und Standplatte montieren</div>
<!-- cylinder -->
<div class="a" style="left:631px;top:701px;width:23px;height:93px;background:linear-gradient(90deg,#8a8a8a 0%,#b9b9b9 20%,#9c9c9c 45%,#6f6f6f 50%,#cfcfcf 60%,#a8a8a8 85%,#7c7c7c 100%)"></div>
<div class="a" style="left:631px;top:697px;width:23px;height:9px;border-radius:50%;background:#c8c8c8"></div>
<div class="a" style="left:635px;top:717px;width:4px;height:6px;border-radius:50%;background:#111"></div>
<!-- list -->
<div class="t" style="left:851px;top:697.5px;font-size:13px;color:#333;line-height:17px">1.</div>
<div class="t" style="left:865px;top:697.5px;font-size:13px;color:#333;letter-spacing:-0.41px;line-height:17px">Befestigen Sie die Justierschraube 1 an der Teleskopstange 2,<br>wie in Abbildung 1 zu sehen und ziehen Sie die Justierschraube<br>handfest an.</div>
<div class="t" style="left:851px;top:757px;font-size:13px;color:#333;line-height:17px">2.</div>
<div class="t" style="left:865px;top:757px;font-size:13px;color:#333;letter-spacing:-0.41px;line-height:17px">Stecken Sie die Teleskopstange 2 in die runde Aussparung an<br>der Oberseite des Bodenständers 3.</div>
<!-- right side panel -->
<div class="a" style="left:1233px;top:638px;width:1px;height:156px;background:#e8e8e8"></div>
<div class="a" style="left:1232px;top:712px;width:3px;height:7.5px;background:#8a8a8a;border-radius:50%"></div>
<svg style="left:1486px;top:643px" width="9" height="15"><path d="M1.5 1 L7.5 7.5 L1.5 14" stroke="#333" stroke-width="1.5" fill="none"/></svg>
<div class="a" style="left:1234px;top:662px;width:270px;height:1px;background:#e4e4e4"></div>
<div class="a" style="left:1240px;top:672px;width:258px;height:35px;background:#ebebeb;border-radius:6px"></div>
<div class="t" style="left:1248px;top:684px;font-size:12.5px;color:#333;letter-spacing:-0.35px">Vergleichen</div>
<svg style="left:1476px;top:683px" width="13" height="13"><path d="M6.5 0 V13 M0 6.5 H13" stroke="#444" stroke-width="2"/></svg>
<div class="a" style="left:1240px;top:712px;width:258px;height:35px;background:#ebebeb;border-radius:6px"></div>
<div class="t" style="left:1248px;top:724px;font-size:12.5px;color:#333;letter-spacing:-0.35px">Filter-Voransicht</div>
<svg style="left:1476px;top:723px" width="13" height="13"><path d="M6.5 0 V13 M0 6.5 H13" stroke="#444" stroke-width="2"/></svg>
<div class="a" style="left:1240px;top:752px;width:258px;height:35px;background:#ebebeb;border-radius:6px"></div>
<div class="t" style="left:1248px;top:764px;font-size:12.5px;color:#333;letter-spacing:-0.35px">Autorenunterstützung</div>
<svg style="left:1476px;top:763px" width="13" height="13"><path d="M6.5 0 V13 M0 6.5 H13" stroke="#444" stroke-width="2"/></svg>
<div class="a" style="left:1240px;top:791px;width:258px;height:10px;background:#ebebeb;border-radius:6px"></div>
<div class="a" style="left:32px;top:21px;width:1472px;height:774px;border:1px solid #2e2e2e;border-radius:10px;pointer-events:none"></div>
</div>
</body></html>
